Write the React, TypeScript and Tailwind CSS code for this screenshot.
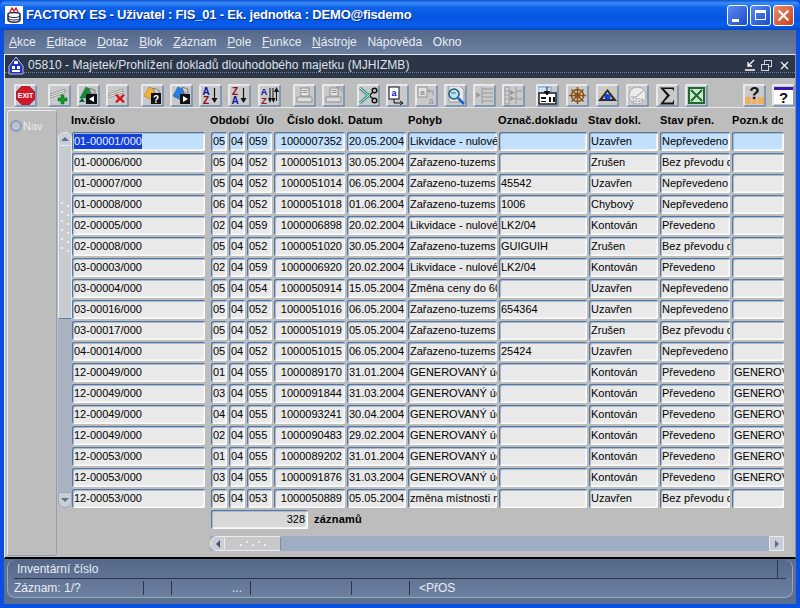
import type { ReactNode } from "react"
import { X } from "lucide-react"

type Row = string[]

const rows: Row[] = [
  ["01-00001/000", "05", "04", "059", "1000007352", "20.05.2004 1", "Likvidace - nulové", "", "Uzavřen", "Nepřevedeno", ""],
  ["01-00006/000", "05", "04", "052", "1000051013", "30.05.2004 1", "Zařazeno-tuzems", "", "Zrušen", "Bez převodu do", ""],
  ["01-00007/000", "05", "04", "052", "1000051014", "06.05.2004 1", "Zařazeno-tuzems", "45542", "Uzavřen", "Nepřevedeno", ""],
  ["01-00008/000", "06", "04", "052", "1000051018", "01.06.2004 1", "Zařazeno-tuzems", "1006", "Chybový", "Nepřevedeno", ""],
  ["02-00005/000", "02", "04", "059", "1000006898", "20.02.2004 1", "Likvidace - nulové", "LK2/04", "Kontován", "Převedeno", ""],
  ["02-00008/000", "05", "04", "052", "1000051020", "30.05.2004 1", "Zařazeno-tuzems", "GUIGUIH", "Zrušen", "Bez převodu do", ""],
  ["03-00003/000", "02", "04", "059", "1000006920", "20.02.2004 1", "Likvidace - nulové", "LK2/04", "Kontován", "Převedeno", ""],
  ["03-00004/000", "05", "04", "054", "1000050914", "15.05.2004 1", "Změna ceny do 60", "", "Uzavřen", "Nepřevedeno", ""],
  ["03-00016/000", "05", "04", "052", "1000051016", "06.05.2004 1", "Zařazeno-tuzems", "654364", "Uzavřen", "Nepřevedeno", ""],
  ["03-00017/000", "05", "04", "052", "1000051019", "05.05.2004 1", "Zařazeno-tuzems", "", "Zrušen", "Bez převodu do", ""],
  ["04-00014/000", "05", "04", "052", "1000051015", "06.05.2004 1", "Zařazeno-tuzems", "25424", "Uzavřen", "Nepřevedeno", ""],
  ["12-00049/000", "01", "04", "055", "1000089170", "31.01.2004 1", "GENEROVANÝ účet", "", "Kontován", "Převedeno", "GENEROVANÝ"],
  ["12-00049/000", "03", "04", "055", "1000091844", "31.03.2004 1", "GENEROVANÝ účet", "", "Kontován", "Převedeno", "GENEROVANÝ"],
  ["12-00049/000", "04", "04", "055", "1000093241", "30.04.2004 1", "GENEROVANÝ účet", "", "Kontován", "Převedeno", "GENEROVANÝ"],
  ["12-00049/000", "02", "04", "055", "1000090483", "29.02.2004 1", "GENEROVANÝ účet", "", "Kontován", "Převedeno", "GENEROVANÝ"],
  ["12-00053/000", "01", "04", "055", "1000089202", "31.01.2004 1", "GENEROVANÝ účet", "", "Kontován", "Převedeno", "GENEROVANÝ"],
  ["12-00053/000", "03", "04", "055", "1000091876", "31.03.2004 1", "GENEROVANÝ účet", "", "Kontován", "Převedeno", "GENEROVANÝ"],
  ["12-00053/000", "05", "04", "053", "1000050889", "05.05.2004 1", "změna místnosti na", "", "Uzavřen", "Bez převodu do", ""],
]

const gridCols = "grid-cols-[137px_16px_16px_25px_71px_59px_89px_88px_69px_70px_52px]"

const menus = [
  ["A", "kce"], ["E", "ditace"], ["D", "otaz"], ["B", "lok"], ["Z", "áznam"],
  ["P", "ole"], ["F", "unkce"], ["N", "ástroje"], ["", "Nápověda"], ["", "Okno"],
]

const wellShadow = "shadow-[inset_1px_1px_0_#55779f,inset_2px_2px_0_#a9bbd0,inset_-1px_-1px_0_#fbfbfb,inset_-2px_-2px_0_#f2f2f2]"

function Cell({ text, blue, right, selected }: { text: string; blue: boolean; right?: boolean; selected?: boolean }) {
  return (
    <div
      className={`h-[19px] overflow-hidden whitespace-nowrap rounded-[2px] pl-[2px] text-[11px] leading-[19px] text-black ${wellShadow} ${blue ? "bg-[#c2dffb]" : "bg-[#e9e9e9]"} ${right ? "pr-[3px] text-right" : ""}`}
    >
      {selected ? <span className="inline-block bg-[#1440d8] leading-[15px] text-[#e8f2ff]">{text}</span> : text}
    </div>
  )
}

function ToolButton({ children, className = "" }: { children: ReactNode; className?: string }) {
  return (
    <div
      className={`flex h-[23px] w-[23px] shrink-0 items-center justify-center rounded-[2px] border-2 border-t-[#e6eaef] border-l-[#e6eaef] border-r-[#8398b3] border-b-[#8398b3] bg-[#c9c9c9] ${className}`}
    >
      <svg width="19" height="19" viewBox="0 0 19 19" fontFamily="Liberation Sans, sans-serif" fontWeight="bold">
        {children}
      </svg>
    </div>
  )
}

const Stripes = ({ fill = "#9a9a9a" }: { fill?: string }) => (
  <g>
    <path d="M0 8 L15 3 V7 L0 12 Z" fill="#e8e8e8" stroke={fill} strokeWidth="1" />
    <path d="M0 10 L15 5" stroke={fill} />
  </g>
)

const PrintIcon = (
  <g fill="none" stroke="#8f8f8f">
    <rect x="6" y="2" width="8" height="8" fill="#e8e8e8" />
    <path d="M7.500 4.500h5M7.500 6.500h5" />
    <path d="M2 11h15v5H2z" fill="#dcdcdc" />
  </g>
)

const icons: { node: ReactNode; ml: string }[] = [
  {
    ml: "ml-[9px]",
    node: (
      <g>
        <path d="M6 0h7l6 6v7l-6 6H6l-6-6V6z" fill="#d0182c" stroke="#8a1020" strokeWidth=".6" />
        <text x="9.500" y="12" fontSize="7" fill="#fff" textAnchor="middle">EXIT</text>
      </g>
    ),
  },
  {
    ml: "ml-[11px]",
    node: (
      <g>
        <Stripes />
        <path d="M11 9h3v3h3v3h-3v3h-3v-3H8v-3h3z" fill="#0f9a2a" stroke="#06581a" strokeWidth=".5" />
      </g>
    ),
  },
  {
    ml: "ml-[6px]",
    node: (
      <g>
        <path d="M1 12 L7 1 L14 5 L10 12 Z" fill="#138a3c" stroke="#064" strokeWidth=".5" />
        <path d="M10 2l6 2v4h-4z" fill="#bbb" stroke="#555" strokeWidth=".6" />
        <path d="M3 12l3 4H0z" fill="#063" />
        <rect x="7" y="8" width="11" height="10" fill="#111" />
        <path d="M15 10v6l-5-3z" fill="#fff" />
      </g>
    ),
  },
  {
    ml: "ml-[6px]",
    node: (
      <g>
        <Stripes />
        <path d="M7 9l2-1 3 3 3-3 2 1-3 3.500 3 3.500-2 1-3-3-3 3-2-1 3-3.500z" fill="#d8141c" />
      </g>
    ),
  },
  {
    ml: "ml-[12px]",
    node: (
      <g>
        <path d="M1 10 L6 1 L13 4 L9 14 Z" fill="#f2b437" stroke="#a06a10" strokeWidth=".5" />
        <path d="M10 2l6 2v4h-4z" fill="#ccc" stroke="#555" strokeWidth=".6" />
        <rect x="8" y="7" width="10" height="11" fill="#111" />
        <text x="13" y="16.500" fontSize="10" fill="#fff" textAnchor="middle">?</text>
      </g>
    ),
  },
  {
    ml: "ml-[6px]",
    node: (
      <g>
        <path d="M1 10 L6 1 L13 4 L9 14 Z" fill="#2b7fe0" stroke="#0b4a96" strokeWidth=".5" />
        <path d="M10 1l6 2v4h-4z" fill="#ccc" stroke="#555" strokeWidth=".6" />
        <rect x="8" y="8" width="10" height="10" fill="#111" />
        <path d="M11 10v6l5-3z" fill="#fff" />
      </g>
    ),
  },
  {
    ml: "ml-[6px]",
    node: (
      <g>
        <text x="5" y="9" fontSize="10" fill="#12129a" textAnchor="middle">A</text>
        <text x="5" y="18" fontSize="10" fill="#8c1020" textAnchor="middle">Z</text>
        <path d="M13.500 2v13" stroke="#111" strokeWidth="1.200" />
        <path d="M10.500 12h6l-3 5z" fill="#111" />
      </g>
    ),
  },
  {
    ml: "ml-[6px]",
    node: (
      <g>
        <text x="5" y="9" fontSize="10" fill="#8c1020" textAnchor="middle">Z</text>
        <text x="5" y="18" fontSize="10" fill="#12129a" textAnchor="middle">A</text>
        <path d="M13.500 2v13" stroke="#111" strokeWidth="1.200" />
        <path d="M10.500 12h6l-3 5z" fill="#111" />
      </g>
    ),
  },
  {
    ml: "ml-[7px]",
    node: (
      <g>
        <text x="4" y="9" fontSize="9" fill="#12129a" textAnchor="middle">A</text>
        <text x="4" y="18" fontSize="9" fill="#8c1020" textAnchor="middle">Z</text>
        <path d="M10 2v13M13 2v13M16.500 2v13" stroke="#111" />
        <path d="M8 12h4l-2 5zM11.500 12h4l-2 5zM14 6h5l-2.500-5z" fill="#111" />
      </g>
    ),
  },
  { ml: "ml-[12px]", node: PrintIcon },
  {
    ml: "ml-[6px]",
    node: (
      <g>
        {PrintIcon}
        <path d="M12 1c3 0 5 2 6 5M14 0c2 0 4 1 5 3" stroke="#8f8f8f" fill="none" />
      </g>
    ),
  },
  {
    ml: "ml-[12px]",
    node: (
      <g fill="none">
        <path d="M1 2 L11 11 M1 17 L11 8" stroke="#2f8f85" strokeWidth="3" />
        <path d="M1 2 L11 11 M1 17 L11 8" stroke="#cdeee8" strokeWidth="1" />
        <path d="M11 9l3-3M11 10l3 3" stroke="#111" strokeWidth="1.200" />
        <circle cx="15.500" cy="4.500" r="2.300" stroke="#111" strokeWidth="1.500" />
        <circle cx="15.500" cy="14.500" r="2.300" stroke="#111" strokeWidth="1.500" />
      </g>
    ),
  },
  {
    ml: "ml-[6px]",
    node: (
      <g>
        <rect x="1" y="1" width="10" height="12" fill="#fff" stroke="#111" />
        <text x="6" y="10" fontSize="9" fill="#1212c0" textAnchor="middle">a</text>
        <path d="M6 13v4h8M12 15l3 2-3 2" stroke="#111" fill="none" />
      </g>
    ),
  },
  {
    ml: "ml-[6px]",
    node: (
      <g>
        <rect x="1" y="1" width="9" height="10" fill="#e0e0e0" stroke="#929292" />
        <text x="5.500" y="9" fontSize="8" fill="#929292" textAnchor="middle">a</text>
        <path d="M11 5h5v4M11 5l2-2M11 5l2 2" stroke="#929292" fill="none" />
        <text x="14" y="18" fontSize="9" fontWeight="normal" fill="#929292" textAnchor="middle">a</text>
      </g>
    ),
  },
  {
    ml: "ml-[6px]",
    node: (
      <g>
        <path d="M3 0h11l4 4v12H3z" fill="#e6e6e6" stroke="#999" />
        <circle cx="8" cy="8" r="5" fill="#b7e4ec" stroke="#1a5d80" strokeWidth="1.500" />
        <path d="M5 7h5" stroke="#666" />
        <path d="M12 12l6 6" stroke="#1269c8" strokeWidth="2.500" />
      </g>
    ),
  },
  {
    ml: "ml-[6px]",
    node: (
      <g fill="#9a9a9a">
        <path d="M7 1v17" stroke="#9a9a9a" />
        <path d="M7 3h11M7 7h11M7 11h11M7 15h11" stroke="#9a9a9a" />
        <path d="M1 6v6l5-3z" />
      </g>
    ),
  },
  {
    ml: "ml-[6px]",
    node: (
      <g fill="#9a9a9a" stroke="#9a9a9a">
        <path d="M1 1h4v17H1zM12 1v17" fill="#d5d5d5" />
        <path d="M1 5h4M1 9h4M1 13h4M12 5h6M12 13h6" />
        <path d="M6 4v5l5-2.500zM6 10v5l5-2.500z" stroke="none" />
      </g>
    ),
  },
  {
    ml: "ml-[11px]",
    node: (
      <g>
        <rect x="0" y="1" width="13" height="6" fill="#cfe3f8" stroke="#7a9cc8" />
        <rect x="1" y="7" width="17" height="11" fill="#fff" stroke="#111" strokeWidth="1.400" />
        <path d="M9 1v6M6 5l3 4 3-4" stroke="#111" fill="#111" />
        <path d="M3 11h5v2H3zM3 15h5v1H3zM11 11h2v5h-2zM15 11h2v5h-2z" fill="#111" />
      </g>
    ),
  },
  {
    ml: "ml-[7px]",
    node: (
      <g fill="none" stroke="#8a5214" strokeWidth="1.500">
        <circle cx="9.500" cy="9.500" r="6" />
        <circle cx="9.500" cy="9.500" r="2" />
        <path d="M9.500 1v17M1 9.500h17M3.500 3.500l12 12M15.500 3.500l-12 12" />
      </g>
    ),
  },
  {
    ml: "ml-[7px]",
    node: (
      <g>
        <path d="M9.500 3L19 15H0z" fill="#2a2a2a" />
        <path d="M9.500 6l5 7h-10z" fill="#d9d9d9" />
        <circle cx="9.500" cy="11" r="3" fill="#1740d0" />
        <path d="M2 5l2 2M17 5l-2 2M9.500 0v2" stroke="#f0e030" strokeWidth="1.200" />
      </g>
    ),
  },
  {
    ml: "ml-[7px]",
    node: (
      <g>
        <circle cx="9.500" cy="9.500" r="8.500" fill="#ececec" stroke="#a8a8a8" />
        <path d="M3 11h5l7-6" stroke="#9a9a9a" fill="none" />
        <text x="9.500" y="16" fontSize="5" fontWeight="normal" fill="#8a8a8a" textAnchor="middle">1214</text>
      </g>
    ),
  },
  {
    ml: "ml-[7px]",
    node: <path d="M2 1.500h14v4l-1.500-2.500H6l6 6.500-6.500 7h9l1.500-3v5H2l7-9z" fill="#111" />,
  },
  {
    ml: "ml-[6px]",
    node: (
      <g>
        <rect x="1" y="1" width="17" height="17" fill="#1d6b2c" />
        <rect x="3" y="3" width="13" height="13" fill="#cfe6d3" />
        <path d="M4 4l11 11M15 4L4 15" stroke="#1d6b2c" strokeWidth="2" />
      </g>
    ),
  },
  {
    ml: "ml-[35px]",
    node: (
      <g>
        <rect x="0" y="11" width="6" height="7" fill="#f0b060" />
        <rect x="13" y="11" width="6" height="7" fill="#f0b060" />
        <rect x="7" y="13" width="5" height="5" fill="#f0b060" />
        <text x="9.500" y="13" fontSize="17" fill="#111" textAnchor="middle">?</text>
      </g>
    ),
  },
  {
    ml: "ml-[6px]",
    node: (
      <g>
        <rect x="0" y="1" width="19" height="17" fill="#fff" />
        <rect x="0" y="1" width="19" height="3" fill="#3a18b0" />
        <text x="9.500" y="17" fontSize="15" fill="#111" textAnchor="middle">?</text>
      </g>
    ),
  },
]

export default function App() {
  return (
    <div className="flex h-[608px] w-[800px] flex-col overflow-hidden bg-[#0b4fe0] font-['Liberation_Sans',Arial,sans-serif]">
      {/* title bar */}
      <div className="flex h-[30px] shrink-0 items-center rounded-t-[7px] bg-[linear-gradient(180deg,#0a55d8_0%,#3c8cf5_10%,#0f62ea_25%,#0556e0_60%,#0a5cec_85%,#0548c4_100%)] pl-[5px] pr-[6px]">
        <svg width="18" height="18" viewBox="0 0 18 18" className="shrink-0">
          <rect width="18" height="18" fill="#fff" />
          <path d="M3 8c1-2 11-2 12 0v6c-1 3-11 3-12 0z" fill="none" stroke="#20204a" strokeWidth="1.500" />
          <path d="M3 10c2 2 10 2 12 0M3 12.500c2 2 10 2 12 0" stroke="#20204a" fill="none" />
          <path d="M5 6l2-4 2 3 2-3 2 4" stroke="#d01818" fill="none" strokeWidth="1.300" />
        </svg>
        <span className="ml-[3px] whitespace-nowrap text-[13px] font-bold tracking-[-0.2px] text-white [text-shadow:1px_1px_0_#0a2f8c]">
          FACTORY ES - Uživatel : FIS_01 - Ek. jednotka : DEMO@fisdemo
        </span>
        <div className="ml-auto flex gap-[2px]">
          <div className="flex h-[21px] w-[21px] items-end rounded-[3px] border border-white bg-[linear-gradient(135deg,#5c8cf0,#1c4ac8)] pb-[3px] pl-[4px]">
            <div className="h-[3px] w-[7px] bg-white" />
          </div>
          <div className="flex h-[21px] w-[21px] items-center justify-center rounded-[3px] border border-white bg-[linear-gradient(135deg,#5c8cf0,#1c4ac8)]">
            <div className="h-[10px] w-[11px] border border-t-[3px] border-white" />
          </div>
          <div className="flex h-[21px] w-[21px] items-center justify-center rounded-[3px] border border-white bg-[linear-gradient(135deg,#e8906c,#c8401c)]">
            <X size={17} color="#fff" strokeWidth={3} />
          </div>
        </div>
      </div>

      <div className="mx-[4px] mb-[4px] flex min-h-0 flex-1 flex-col bg-[#5b6f8e]">
        {/* menu */}
        <div className="flex h-[24px] shrink-0 items-center gap-[10.700px] bg-[linear-gradient(180deg,#55688a,#6d80a0)] pl-[5px] text-[12px] text-[#e8ecf2]">
          {menus.map(([u, rest]) => (
            <span key={u + rest}>
              <span className="underline">{u}</span>
              {rest}
            </span>
          ))}
        </div>

        {/* inner window */}
        <div className="flex h-[505px] shrink-0 flex-col border-t border-l border-t-[#e6e9ee] border-l-[#e6e9ee] border-r border-r-[#8a94a5] border-b-2 border-b-black bg-[#bdbdbd]">
          <div className="h-[23px] shrink-0 bg-[#2b3648]">
            <div className="flex h-[18px] items-center border-b border-dotted border-[#74808f] pl-[2px] pr-[4px] pt-[3px]">
              <svg width="18" height="19" viewBox="0 0 18 19" className="shrink-0">
                <path d="M9 1l7 9v8H2v-8z" fill="#2230c8" stroke="#b8bec8" />
                <rect x="7" y="5" width="4" height="3" fill="#fff" />
                <rect x="5" y="10" width="3" height="3" fill="#fff" />
                <rect x="10" y="10" width="3" height="3" fill="#fff" />
                <rect x="5" y="14" width="8" height="2" fill="#fff" />
              </svg>
              <span className="ml-[3px] whitespace-nowrap text-[12px] tracking-[0.05px] text-[#dfe3ea]">
                05810 - Majetek/Prohlížení dokladů dlouhodobého majetku (MJHIZMB)
              </span>
              <div className="ml-auto flex items-center gap-[6px]">
                <svg width="10" height="12" viewBox="0 0 10 12">
                  <path d="M9 1L3 7M3 3v4h4" stroke="#fff" fill="none" strokeWidth="1.300" />
                  <path d="M0 11h10" stroke="#fff" strokeWidth="1.500" />
                </svg>
                <svg width="11" height="11" viewBox="0 0 11 11" fill="none" stroke="#d0d4dc">
                  <rect x="3.500" y=".5" width="7" height="6" />
                  <rect x=".5" y="4.500" width="7" height="6" fill="#2b3648" />
                </svg>
                <X size={13} color="#fff" strokeWidth={2} />
              </div>
            </div>
          </div>

          {/* toolbar */}
          <div className="flex h-[30px] shrink-0 items-start border-b border-[#e4e7ec] pt-[6px]">
            {icons.map((ic, i) => (
              <ToolButton key={i} className={ic.ml}>
                {ic.node}
              </ToolButton>
            ))}
          </div>

          {/* content */}
          <div className="flex min-h-0 flex-1 pl-[2px]">
            <div className="mt-[2px] flex h-[446px] w-[50px] shrink-0 items-start rounded-[3px] border border-[#e6e9ee] border-r-[#8ea0b8] border-b-[#8ea0b8] pl-[2px] pt-[9px]">
              <div className="h-[12px] w-[12px] shrink-0 rounded-full border-2 border-[#8c9db3] bg-[#b8c4d2]" />
              <span className="ml-[1px] text-[11px] leading-[13px] text-[#e8eaee]">Nav</span>
            </div>

            <div className="flex flex-col">
              <div className="flex">
                {/* vertical scrollbar */}
                <div className="mt-[24px] ml-px flex h-[376px] w-[14px] shrink-0 flex-col">
                  <div className="flex h-[14px] items-center justify-center rounded-t-[7px] border border-[#e8ecf0] bg-[#c9ced6]">
                    <div className="h-0 w-0 border-x-[4px] border-b-[4px] border-x-transparent border-b-[#5d7090]" />
                  </div>
                  <div className="flex h-[173px] flex-col items-center justify-center gap-[4px] border-l border-r border-b border-[#e8ecf0] border-b-[#5f7ea6] bg-[#c8ccd0] pb-[10px]">
                    {[0, 1, 2, 3, 4, 5].map((d) => (
                      <div key={d} className="flex items-start gap-[4px]">
                        <div className="h-[2px] w-[2px] bg-[#f0f0f0]" />
                        <div className="mt-[3px] h-[2px] w-[2px] bg-[#f0f0f0]" />
                      </div>
                    ))}
                  </div>
                  <div className="flex-1 bg-[#a9b2c0]" />
                  <div className="flex h-[16px] items-center justify-center rounded-b-[7px] border border-[#9fa8b6] bg-[#c9ced6]">
                    <div className="h-0 w-0 border-x-[4px] border-t-[4px] border-x-transparent border-t-[#5d7090]" />
                  </div>
                </div>

                {/* table */}
                <div>
                  <div className={`-ml-px grid h-[24px] ${gridCols} items-center gap-x-[2px] whitespace-nowrap text-[11px] font-bold tracking-[0.1px] text-black`}>
                    <span>Inv.číslo</span>
                    <div className="col-span-3 flex">
                      <span className="w-[46px] shrink-0">Období</span>
                      <span>Úlo</span>
                    </div>
                    <span className="pl-[14px]">Číslo dokl.</span>
                    <span className="pl-[2px]">Datum</span>
                    <span className="pl-px">Pohyb</span>
                    <span>Označ.dokladu</span>
                    <span>Stav dokl.</span>
                    <span className="pl-px">Stav přen.</span>
                    <span className="overflow-hidden pl-px">Pozn.k do</span>
                  </div>
                  <div className={`grid ${gridCols} gap-x-[2px] gap-y-[2px]`}>
                    {rows.map((r, ri) =>
                      r.map((c, ci) => (
                        <div key={`${ri}-${ci}`} className={ci === 0 ? "mr-[4px]" : ""}>
                          <Cell text={c} blue={ri === 0} right={ci === 4} selected={ci === 0 && ri === 0} />
                        </div>
                      )),
                    )}
                  </div>
                </div>
              </div>

              <div className="ml-[154px] mt-[2px] flex items-center">
                <div className={`h-[19px] w-[97px] rounded-[2px] bg-[#d8d8d8] pr-[3px] text-right text-[11px] leading-[19px] text-black ${wellShadow}`}>
                  328
                </div>
                <span className="ml-[6px] text-[11px] font-bold tracking-[0.2px] text-black">záznamů</span>
              </div>

              {/* horizontal scrollbar */}
              <div className="ml-[153px] mt-[7px] flex h-[15px] w-[574px] items-stretch bg-[#9fadc4]">
                <div className="flex w-[15px] items-center justify-center rounded-l-[7px] border border-[#e8ecf0] bg-[#c9ced6]">
                  <div className="h-0 w-0 border-y-[4px] border-r-[4px] border-y-transparent border-r-[#44546e]" />
                </div>
                <div className="flex w-[56px] items-center justify-center gap-[4px] border-y border-r border-[#e8ecf0] border-r-[#7d8ea8] bg-[#c8c8c8]">
                  <div className="mt-[3px] h-[2px] w-[2px] bg-[#ededed]" />
                  <div className="-mt-[3px] h-[2px] w-[2px] bg-[#ededed]" />
                  <div className="mt-[3px] h-[2px] w-[2px] bg-[#ededed]" />
                  <div className="-mt-[3px] h-[2px] w-[2px] bg-[#ededed]" />
                  <div className="mt-[3px] h-[2px] w-[2px] bg-[#ededed]" />
                </div>
                <div className="flex-1" />
                <div className="flex w-[15px] items-center justify-center border border-[#e8ecf0] bg-[#c9ced6]">
                  <div className="h-0 w-0 border-y-[4px] border-l-[4px] border-y-transparent border-l-[#5d7090]" />
                </div>
              </div>
            </div>
          </div>
        </div>

        {/* status */}
        <div className="mx-[3px] mt-px flex h-[38px] flex-col rounded-[8px] border border-t-0 border-[#9aa8be] bg-[linear-gradient(180deg,#55688a,#6d80a0)] px-[6px] text-[12px] text-[#e8ecf2]">
          <div className="flex h-[19px] shrink-0 items-center border-b border-[#2b3648] pl-[3px]">
            <span>Inventární číslo</span>
            <div className="ml-auto mr-[8px] h-full w-px bg-[#2b3648]" />
          </div>
          <div className="flex h-[18px] items-center">
            <div className="h-[14px] w-[130px] shrink-0 border-r border-[#2b3648] leading-[14px]">Záznam: 1/?</div>
            <div className="h-[14px] w-[28px] shrink-0 border-r border-[#2b3648]" />
            <div className="h-[14px] w-[79px] shrink-0 border-r border-[#2b3648] pr-[8px] text-right leading-[14px]">...</div>
            <div className="h-[14px] w-[101px] shrink-0 border-r border-[#2b3648]" />
            <div className="h-[14px] w-[58px] shrink-0 border-r border-[#2b3648]" />
            <span className="ml-[9px] leading-[14px]">&lt;PřOS</span>
          </div>
        </div>
      </div>
    </div>
  )
}
